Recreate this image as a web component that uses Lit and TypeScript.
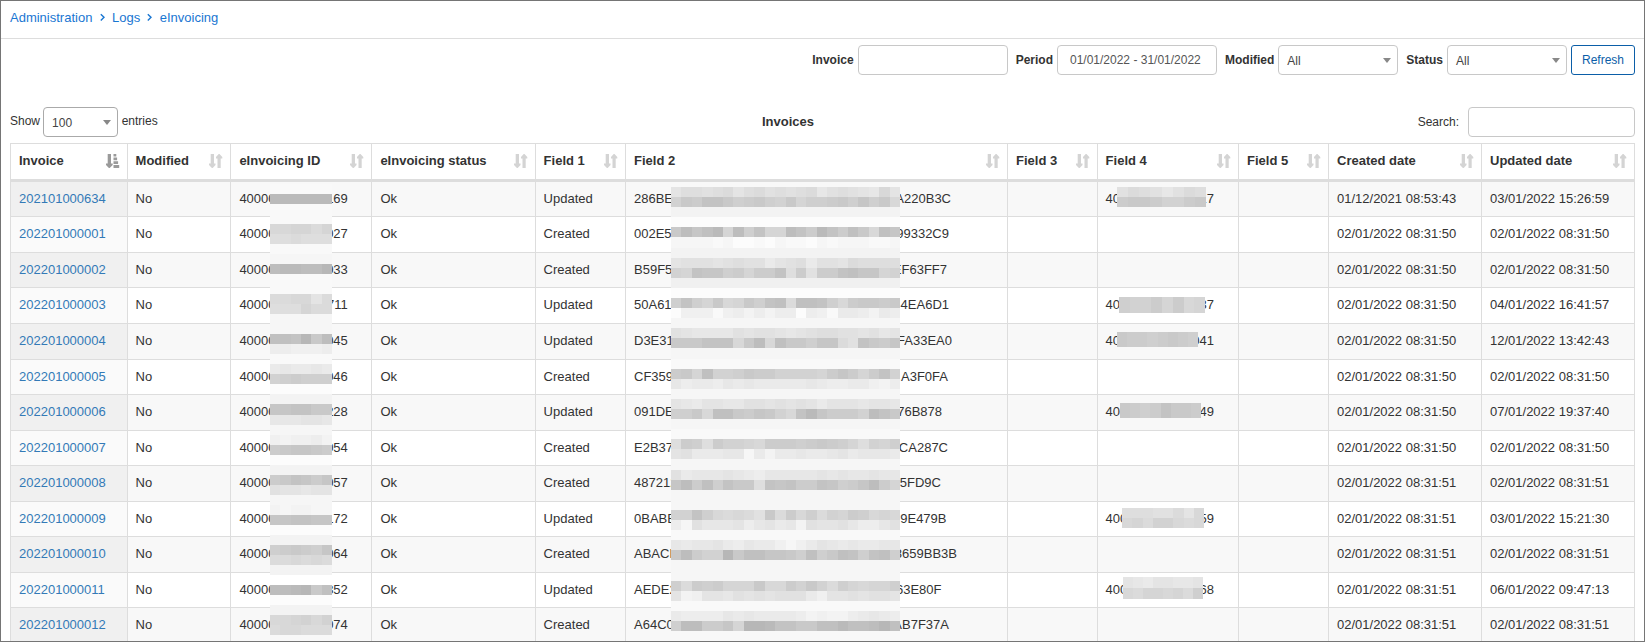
import { LitElement, html, css, svg } from 'lit';
import { customElement } from 'lit/decorators.js';

type Row = [string, string, string, string, string, string, string, string];

const COLUMNS = [
  'Invoice', 'Modified', 'eInvoicing ID', 'eInvoicing status', 'Field 1', 'Field 2',
  'Field 3', 'Field 4', 'Field 5', 'Created date', 'Updated date',
];

// invoice, id tail, action, hash head, hash tail, field 4 head|tail, created, updated
const ROWS: Row[] = [
  ['202101000634', '169', 'Updated', '286BE', 'A220B3C', '40|17', '01/12/2021 08:53:43', '03/01/2022 15:26:59'],
  ['202201000001', '027', 'Created', '002E5', '99332C9', '', '02/01/2022 08:31:50', '02/01/2022 08:31:50'],
  ['202201000002', '033', 'Created', 'B59F5', 'EF63FF7', '', '02/01/2022 08:31:50', '02/01/2022 08:31:50'],
  ['202201000003', '711', 'Updated', '50A61', '4EA6D1', '40|37', '02/01/2022 08:31:50', '04/01/2022 16:41:57'],
  ['202201000004', '045', 'Updated', 'D3E31', 'FA33EA0', '40|041', '02/01/2022 08:31:50', '12/01/2022 13:42:43'],
  ['202201000005', '046', 'Created', 'CF359', 'A3F0FA', '', '02/01/2022 08:31:50', '02/01/2022 08:31:50'],
  ['202201000006', '228', 'Updated', '091DE', '76B878', '40|49', '02/01/2022 08:31:50', '07/01/2022 19:37:40'],
  ['202201000007', '054', 'Created', 'E2B37', 'CA287C', '', '02/01/2022 08:31:50', '02/01/2022 08:31:50'],
  ['202201000008', '057', 'Created', '487212', '5FD9C', '', '02/01/2022 08:31:51', '02/01/2022 08:31:51'],
  ['202201000009', '172', 'Updated', '0BABE', '9E479B', '400|59', '02/01/2022 08:31:51', '03/01/2022 15:21:30'],
  ['202201000010', '064', 'Created', 'ABACD', '8659BB3B', '', '02/01/2022 08:31:51', '02/01/2022 08:31:51'],
  ['202201000011', '352', 'Updated', 'AEDE2', '63E80F', '400|68', '02/01/2022 08:31:51', '06/01/2022 09:47:13'],
  ['202201000012', '074', 'Created', 'A64C0', 'AB7F37A', '', '02/01/2022 08:31:51', '02/01/2022 08:31:51'],
];

// Right edge of the hash text, measured from the cell's text start.
const HASH_END = [317, 315, 313, 315, 318, 314, 308, 314, 307, 312.5, 323, 307.5, 315];

// Mosaic shades: each character is a base-36 step of three grey levels above 180.
const ID_MOSAIC = `nnnnnn 222222 nnnnnn nnnnnn ccbbdb eedeee nnnnnn mmmmmm 322331 nnnnnn nnnnnn
ddccgd eeebdd mmmmmm mmmmmm 445173 jjkkkj nnnnnn ihiihi a98999 oooooo llllll 665577 hhhggh
mmmmmm klkkjl 876678 oooooo llllll 875686 fgghgg mmmmmm lmllmm 665566 oooooo llllll 987896
ddcdcd llllll pppppp 332174 oooooo llllll ccbaca dccddd`.split(/\s+/);

const HASH_MOSAIC = `
geefedgedfefedhfefghcg a785579879a7b99879697c llllllllllllllllllllll oooooooooooooooooooooo
7364 2b39 5bb3 5825 847c 46 mmmmnmoonomnnomnmmmnnm llllllllllllllllllllll gfffgfeffigfeiffgdeeee
ab56 698b 885e 8f88 5466 ba kkkkkkkkkkkkkkkkkkkkkk oooooooooooooooooooooo 959b7cb7954d4459c87787
okkknkjljljjojkniijlij mmmmmmmmmmmmmmmmmmmmmm fghhhhfgffghgfeeffgfhg 777555c73c477966df5786
mmmmmmmmmmmmmmmmmmmmmm nnnnnnnnnnnnnnnnnnnnnn 87b4aa9788aaaab868b85a hjiijhihiiiiihijjiiklj
mmmmmmmmmmmmmmmmmmmmmm ghigghhffgfgfgiggghggh 997c44786 7ac526888a357 mmmmmmmmmmmmmmmmmmmmmm
nnnnnnnnnnnnnnnnnnnnnn e89e8aabc8889878 9beab9 gfiiihhmiliihiihgihhhi mmmmmmmmmmmmmmmmmmmmmm
fihhhghijhhhhhghghhghh 63849577e565885698638b mmmmmmmmmmmmmmmmmmmmmm mmmmmmmmmmmmmmmmmmmmmm
aa59cdcdf7d8c9dab89cbc jmfhhhgjhgihlfggfhjjhf nnnnnnnnnnnnnnnnnnnnnn hihhgijhiikmkighihiihh
738aa17446679497459549 mmmmmmmmmmmmmmmmmmmmmm mmmmmmmmmmmmmmmmmmmmmm 9d898bbb7cc8a7ad9bcbb9
glkgghfgfgfffikggfgffg nnnnnnnnnnnnnnnnnnnnnn ijjjjhihiiiijlklljihij 9338 86b1 1255 7744 2443 14`
  .replace(/\s+/g, '').match(/.{22}/g) ?? [];

interface Patch { row: number; x: number; y: number; w: number; h: number; bands: string[] }
const PATCHES: Patch[] = [
  { row: 0, x: 19, y: 5, w: 89, h: 20, bands: ['fdefhfde', '8778aa87'] },
  { row: 3, x: 21, y: 9, w: 86, h: 16, bands: ['9aa8b8cb'] },
  { row: 4, x: 19, y: 8, w: 81, h: 15, bands: ['78898789'] },
  { row: 6, x: 22, y: 8, w: 81, h: 15, bands: ['78985778'] },
  { row: 9, x: 24, y: 6, w: 82, h: 20, bands: ['eeeffdgc', 'cbdaacdc'] },
  { row: 11, x: 25, y: 4, w: 80, h: 22, bands: ['ghigghhg', 'cdbbcbd9'] },
];

const shade = (c: string) => {
  const v = Math.min(255, 180 + parseInt(c, 36) * 3);
  return `rgb(${v},${v},${v})`;
};

const mosaic = (bands: string[], w: number, h: number) => {
  const bh = h / bands.length;
  return html`<svg width=${w} height=${h} viewBox="0 0 ${w} ${h}" shape-rendering="crispEdges">
    ${bands.map((band, j) => {
      const cw = w / band.length;
      return [...band].map((c, i) => svg`<rect x=${i * cw} y=${j * bh} width=${cw} height=${bh} fill=${shade(c)}></rect>`);
    })}
  </svg>`;
};

@customElement('app-root')
export class AppRoot extends LitElement {
  static styles = css`
    :host {
      display: block; box-sizing: border-box; width: 1645px; height: 642px; overflow: hidden;
      border: 1px solid #757575; background: #fff; color: #333;
      font: 12px/18px "Liberation Sans", Arial, sans-serif;
    }
    * { box-sizing: border-box; }
    svg { display: block; }
    .crumbs {
      display: flex; height: 38px; padding: 8px 0 0 9px; border-bottom: 1px solid #ddd;
      font-size: 13px; line-height: 18px; color: #1976d2;
    }
    .crumbs svg { margin: 4px 7.6px 0 7.3px; }
    .crumbs svg + span { margin-left: -0.3px; }
    .filters { display: flex; justify-content: flex-end; height: 30px; margin: 6px 9px 0 0; }
    .filters .label { font-weight: 700; line-height: 30px; margin-right: 4px; text-align: right; }
    .box { height: 30px; border: 1px solid #c8c8c8; border-radius: 4px; background: #fff; }
    .invoice { width: 150px; margin-right: 8px; }
    .period { width: 160px; margin-right: 8px; padding-left: 12px; white-space: nowrap; line-height: 28px; color: #555; }
    .select { display: flex; justify-content: space-between; padding: 0 6px 0 8px; line-height: 31px; color: #444; }
    .select::after {
      content: ""; margin-top: 12px; width: 0; height: 0;
      border: 4px solid transparent; border-top: 5px solid #888; border-bottom: 0;
    }
    .pick { width: 120px; }
    .modified { margin-right: 8px; }
    .status { margin-right: 4px; }
    .refresh {
      width: 64px; height: 30px; border: 1px solid #0b5ea8; border-radius: 3px;
      color: #0b5ea8; text-align: center; line-height: 28px;
    }
    .tools { display: grid; grid-template-columns: 752px 1fr auto; height: 30px; margin: 32px 9px 0; }
    .length { display: flex; line-height: 28px; }
    .length .select { width: 75px; margin: 0 3.6px 0 3px; border-color: #aaa; }
    .title { font-size: 13px; font-weight: 700; line-height: 30px; }
    .search { display: flex; justify-content: flex-end; line-height: 30px; }
    .search .box { width: 167px; margin-left: 9px; }
    .table {
      position: relative; width: 1625px; margin: 6px 0 0 9px;
      border: 1px solid #ddd; border-bottom: 0; font-size: 13px; line-height: 18px;
    }
    .row { display: grid; grid-template-columns: 116px 103px 141px 164px 90px 382px 90px 141px 90px 153px 153px; }
    .row > div { border-left: 1px solid #ddd; padding-left: 8px; white-space: nowrap; overflow: hidden; }
    .row > div:first-child { border-left: 0; }
    .head { height: 38px; border-bottom: 3px solid #ddd; font-weight: 700; }
    .head > div { display: flex; justify-content: space-between; padding: 8px 6.7px 0 8px; }
    .body { display: grid; grid-template-rows: 35px 36px 35px 36px 36px 35px 36px 35px 36px 35px 36px 35px 34px; }
    .body .row { border-bottom: 1px solid #ddd; }
    .body .row > div { padding-top: 8px; }
    .row > div:nth-child(2), .row > div:nth-child(5), .row > div:nth-child(8) { padding-left: 7.6px; }
    .row > div:nth-child(3), .row > div:nth-child(4) { padding-left: 8.4px; }
    .body .row:nth-child(odd) { background: #f8f8f8; }
    .body .row > div:first-child { background: #fafafa; color: #337ab7; }
    .body .row:nth-child(odd) > div:first-child { background: #f0f0f0; }
    .body .row > .masked { display: flex; position: relative; }
    .tail { text-align: right; }
    .hash-tail { position: absolute; left: 8px; }
    .mask { position: absolute; }
    .id { left: 259px; top: 40px; }
    .hash { left: 660px; top: 43px; }
  `;

  private sortIcon(active: boolean) {
    return active
      ? html`<svg width="14" height="17" viewBox="0 0 14 17" fill="#9a9a9a"><path d="M1.700 2h3.300v9.500h1.700v1.500L3.700 16h-.8L0 13v-1.500h1.700zM7.500 2H10.300v2.600H7.500zM7.500 5.600h3.600v2.600H7.500zM7.500 9.200h4.600v2.800H7.500zM7.500 13h5.700v3H7.500z"/></svg>`
      : html`<svg width="14" height="17" viewBox="0 0 14 17" fill="#d4d4d4"><path d="M1.700 2h3.300v9.500h1.500v1.500L3.700 16h-.8L0 13v-1.500h1.700zM8.500 16V6.500H7V5L9.700 2h.8L13.300 5v1.500H11.700V16z"/></svg>`;
  }

  private chevron() {
    return html`<svg width="5" height="9" viewBox="0 0 5 9" fill="none" stroke="#1976d2" stroke-width="1.4"><path d="M.8 1.200 4 4.300.8 7.400"/></svg>`;
  }

  private field4(row: number, text: string) {
    const [head, tail] = text.split('|');
    const p = PATCHES.find((q) => q.row === row);
    if (!p) return html`<div></div>`;
    return html`<div class="masked"><span>${head}</span>
      <span class="tail" style="width:${108.3 - head.length * 7.23}px">${tail}</span>
      <span class="mask" style="left:${p.x}px;top:${p.y}px">${mosaic(p.bands, p.w, p.h)}</span></div>`;
  }

  render() {
    return html`
      <div class="crumbs"><span>Administration</span>${this.chevron()}<span>Logs</span>${this.chevron()}<span>eInvoicing</span></div>
      <div class="filters">
        <span class="label">Invoice</span><div class="box invoice"></div>
        <span class="label">Period</span><div class="box period">01/01/2022 - 31/01/2022</div>
        <span class="label">Modified</span><div class="box select pick modified">All</div>
        <span class="label">Status</span><div class="box select pick status">All</div>
        <div class="refresh">Refresh</div>
      </div>
      <div class="tools">
        <div class="length">Show<div class="box select">100</div>entries</div>
        <div class="title">Invoices</div>
        <div class="search">Search:<div class="box"></div></div>
      </div>
      <div class="table">
        <div class="row head">${COLUMNS.map((c, i) => html`<div>${c}${this.sortIcon(i === 0)}</div>`)}</div>
        <div class="body">
          ${ROWS.map((r, i) => html`<div class="row">
            <div>${r[0]}</div><div>No</div>
            <div class="masked"><span>40000</span><span class="tail" style="width:72.3px">${r[1]}</span></div>
            <div>Ok</div><div>${r[2]}</div>
            <div class="masked"><span>${r[3]}</span><span class="tail hash-tail" style="width:${HASH_END[i]}px">${r[4]}</span></div>
            <div></div>${this.field4(i, r[5])}<div></div>
            <div>${r[6]}</div><div>${r[7]}</div>
          </div>`)}
        </div>
        <div class="mask id">${mosaic(ID_MOSAIC, 62, 451)}</div>
        <div class="mask hash">${mosaic(HASH_MOSAIC, 229, 444)}</div>
      </div>`;
  }
}
